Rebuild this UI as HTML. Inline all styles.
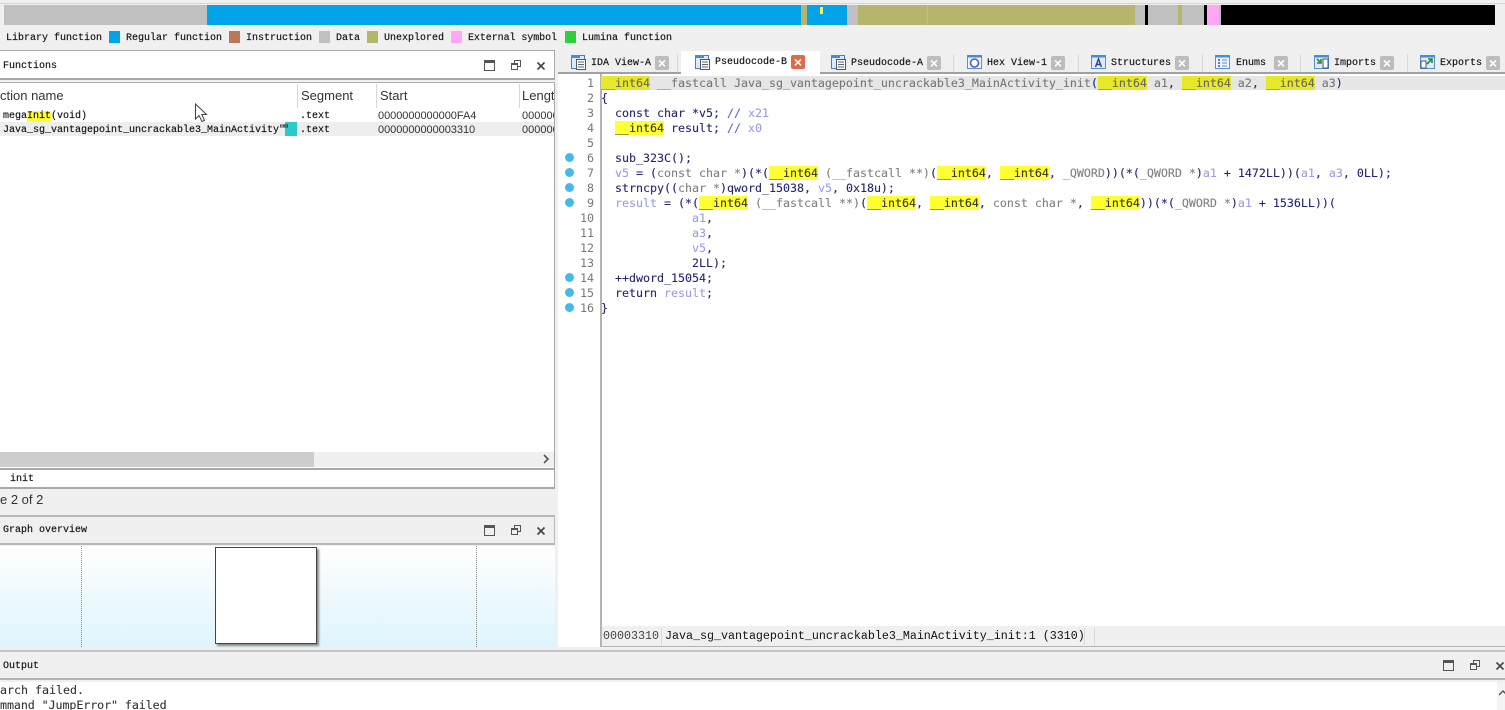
<!DOCTYPE html>
<html><head><meta charset="utf-8"><style>
html,body{margin:0;padding:0;background:#f0f0f0;width:1505px;height:710px;overflow:hidden}
#r{position:relative;width:1505px;height:710px;overflow:hidden;filter:blur(.35px)}
.a{position:absolute}
.t{position:absolute;margin-top:2px;font:10px/14px "Liberation Mono",monospace;color:#111;white-space:pre;-webkit-text-stroke:.15px #111}
.s{position:absolute;font:13px/16px "Liberation Sans",sans-serif;color:#333;white-space:pre}
.c{position:absolute;left:601px;font:11.67px/15px "DejaVu Sans Mono","Liberation Mono",monospace;color:#24246e;white-space:pre;letter-spacing:-.02px;-webkit-text-stroke:.1px}
.n{position:absolute;left:560px;width:34px;text-align:right;font:11.67px/15px "DejaVu Sans Mono",monospace;color:#777}
.d{position:absolute;left:565px;width:9px;height:9px;border-radius:50%;background:#45b8f0}
.g{color:#808080}.l{color:#9c9ce6}.h{background:#ffff33;color:#333}.h1{background:#e8e82a;color:#666}
.sw{position:absolute;top:31px;width:11px;height:12px}
.x{position:absolute;top:56px;width:14px;height:14px;border-radius:2px;background:#bcbcbc;color:#fff;font:bold 14px/14px "Liberation Sans",sans-serif;text-align:center}
.i{position:absolute;top:54px;width:16px;height:16px}
.sp{position:absolute;width:1px;background:#d8d8d8}
</style></head><body><div id="r">

<!-- top strip -->
<div class="a" style="left:0;top:3px;width:1505px;height:1px;background:#d4d4d4"></div>
<div class="a" style="left:4px;top:5px;width:203px;height:20px;background:#c0c0c0"></div>
<div class="a" style="left:207px;top:5px;width:594px;height:20px;background:#00a2e8"></div>
<div class="a" style="left:801px;top:5px;width:6px;height:20px;background:#b5b56b"></div>
<div class="a" style="left:807px;top:5px;width:40px;height:20px;background:#00a2e8"></div>
<div class="a" style="left:820px;top:7px;width:3px;height:7px;background:#ffef50"></div>
<div class="a" style="left:847px;top:5px;width:11px;height:20px;background:#c0c0c0"></div>
<div class="a" style="left:858px;top:5px;width:277px;height:20px;background:#b5b56b"></div>
<div class="a" style="left:927px;top:5px;width:1px;height:20px;background:#c2c282"></div>
<div class="a" style="left:1135px;top:5px;width:10px;height:20px;background:#c0c0c0"></div>
<div class="a" style="left:1145px;top:5px;width:3px;height:20px;background:#000"></div>
<div class="a" style="left:1148px;top:5px;width:30px;height:20px;background:#c0c0c0"></div>
<div class="a" style="left:1178px;top:5px;width:4px;height:20px;background:#b5b56b"></div>
<div class="a" style="left:1182px;top:5px;width:22px;height:20px;background:#c0c0c0"></div>
<div class="a" style="left:1204px;top:5px;width:3px;height:20px;background:#000"></div>
<div class="a" style="left:1207px;top:5px;width:12px;height:20px;background:#ffa6f5"></div>
<div class="a" style="left:1219px;top:5px;width:2px;height:20px;background:#c0c0c0"></div>
<div class="a" style="left:1221px;top:5px;width:274px;height:20px;background:#000"></div>

<!-- legend -->
<div class="t" style="left:6px;top:30px">Library function</div>
<div class="sw" style="left:109px;background:#00a2e8"></div>
<div class="t" style="left:126px;top:30px">Regular function</div>
<div class="sw" style="left:229px;background:#b8795a"></div>
<div class="t" style="left:246px;top:30px">Instruction</div>
<div class="sw" style="left:319px;background:#c0c0c0"></div>
<div class="t" style="left:336px;top:30px">Data</div>
<div class="sw" style="left:367px;background:#b5b56b"></div>
<div class="t" style="left:384px;top:30px">Unexplored</div>
<div class="sw" style="left:451px;background:#ffa6f5"></div>
<div class="t" style="left:468px;top:30px;letter-spacing:-.07px">External symbol</div>
<div class="sw" style="left:565px;background:#2fcf3a"></div>
<div class="t" style="left:582px;top:30px">Lumina function</div>

<!-- Functions panel -->
<div class="a" style="left:0;top:50px;width:555px;height:30px;background:#fff;border-top:1px solid #a8a8a8;border-bottom:2px solid #a8a8a8;border-right:1px solid #a8a8a8;box-sizing:border-box"></div>
<div class="t" style="left:3px;top:58px">Functions</div>
<svg class="a" style="left:484px;top:60px" width="11" height="11"><rect x=".5" y=".5" width="10" height="10" fill="none" stroke="#555"/><rect x="0" y="0" width="11" height="3" fill="#555"/></svg>
<svg class="a" style="left:511px;top:60px" width="10" height="10"><rect x="3.5" y=".5" width="6" height="6" fill="none" stroke="#555"/><rect x=".5" y="3.5" width="6" height="6" fill="#fff" stroke="#555"/><rect x="0" y="3" width="7" height="2" fill="#555"/></svg>
<svg class="a" style="left:536px;top:61px" width="10" height="10"><path d="M1.5 1.5L8.5 8.5M8.5 1.5L1.5 8.5" stroke="#444" stroke-width="1.6"/></svg>

<div class="a" style="left:0;top:82px;width:555px;height:387px;background:#fff;border-right:1px solid #a8a8a8;border-top:1px solid #b0b0b0;box-sizing:border-box"></div>
<div class="s" style="left:0;top:88px">ction name</div>
<div class="s" style="left:301px;top:88px">Segment</div>
<div class="s" style="left:380px;top:88px">Start</div>
<div class="s" style="left:522px;top:88px;width:32px;overflow:hidden">Length</div>
<div class="sp" style="left:297px;top:84px;height:24px"></div>
<div class="sp" style="left:376px;top:84px;height:24px"></div>
<div class="sp" style="left:519px;top:84px;height:24px"></div>

<div class="t" style="left:3px;top:108px">mega<span style="background:#ffff33">Init</span>(void)</div>
<div class="t" style="left:300px;top:108px">.text</div>
<div class="s" style="left:378px;top:108px;font-size:11px;letter-spacing:-.05px">0000000000000FA4</div>
<div class="s" style="left:522px;top:108px;font-size:11px;width:32px;overflow:hidden">00000000</div>
<div class="a" style="left:0;top:122px;width:554px;height:14px;background:#eeeeee"></div>
<div class="t" style="left:3px;top:122px">Java_sg_vantagepoint_uncrackable3_MainActivity</div>
<div class="a" style="left:285px;top:122px;width:12px;height:14px;background:#2cc9c9"></div>
<div class="t" style="left:279px;top:122px;letter-spacing:-2px">""</div>
<div class="t" style="left:300px;top:122px">.text</div>
<div class="s" style="left:378px;top:122px;font-size:11px;letter-spacing:-.05px">0000000000003310</div>
<div class="s" style="left:522px;top:122px;font-size:11px;width:32px;overflow:hidden">00000000</div>

<svg class="a" style="left:194px;top:103px" width="14" height="20"><path d="M1.5 1V16L5 12.5L8 18.5L10.5 17.5L7.8 11.5H12.5Z" fill="#fff" stroke="#444" stroke-width="1"/></svg>

<!-- scrollbar -->
<div class="a" style="left:0;top:452px;width:554px;height:15px;background:#f0f0f0"></div>
<div class="a" style="left:0;top:452px;width:314px;height:15px;background:#cdcdcd"></div>
<svg class="a" style="left:542px;top:454px" width="8" height="10"><path d="M2 1L6 5L2 9" fill="none" stroke="#555" stroke-width="1.6"/></svg>

<!-- filter input -->
<div class="a" style="left:0;top:468px;width:555px;height:21px;background:#fff;border:1px solid #a8a8a8;border-width:2px 1px 2px 0;box-sizing:border-box"></div>
<div class="t" style="left:10px;top:471px">init</div>
<div class="s" style="left:0;top:492px">e 2 of 2</div>

<!-- Graph overview -->
<div class="a" style="left:0;top:515px;width:555px;height:30px;background:#f0f0f0;border:1px solid #b8b8b8;border-width:2px 1px 2px 0;box-sizing:border-box"></div>
<div class="t" style="left:3px;top:522px">Graph overview</div>
<svg class="a" style="left:484px;top:525px" width="11" height="11"><rect x=".5" y=".5" width="10" height="10" fill="none" stroke="#555"/><rect x="0" y="0" width="11" height="3" fill="#555"/></svg>
<svg class="a" style="left:511px;top:525px" width="10" height="10"><rect x="3.5" y=".5" width="6" height="6" fill="none" stroke="#555"/><rect x=".5" y="3.5" width="6" height="6" fill="#f0f0f0" stroke="#555"/><rect x="0" y="3" width="7" height="2" fill="#555"/></svg>
<svg class="a" style="left:536px;top:526px" width="10" height="10"><path d="M1.5 1.5L8.5 8.5M8.5 1.5L1.5 8.5" stroke="#444" stroke-width="1.6"/></svg>
<div class="a" style="left:0;top:546px;width:555px;height:101px;background:linear-gradient(#fff,#def4fd)"></div>
<div class="a" style="left:81px;top:546px;width:0;height:101px;border-left:1px dotted #888"></div>
<div class="a" style="left:476px;top:546px;width:0;height:101px;border-left:1px dotted #888"></div>
<div class="a" style="left:215px;top:547px;width:102px;height:97px;background:#fff;border:1px solid #444;box-sizing:border-box;box-shadow:2px 2px 2px #888"></div>

<!-- Tabs -->
<div class="a" style="left:558px;top:53px;width:947px;height:19px;background:#efefef"></div>
<div class="a" style="left:558px;top:72px;width:947px;height:2px;background:#a0a0a0"></div>
<div class="a" style="left:681px;top:51px;width:139px;height:23px;background:#fff;border-radius:1px 1px 0 0"></div>
<div class="sp" style="left:677px;top:54px;height:18px"></div>
<div class="sp" style="left:953px;top:54px;height:18px"></div>
<div class="sp" style="left:1078px;top:54px;height:18px"></div>
<div class="sp" style="left:1202px;top:54px;height:18px"></div>
<div class="sp" style="left:1300px;top:54px;height:18px"></div>
<div class="sp" style="left:1407px;top:54px;height:18px"></div>

<svg class="i" style="left:571px"><rect x=".5" y="1.5" width="13" height="13" fill="#dbe9f8" stroke="#3f7fc4"/><rect x="0" y="1" width="9" height="3" fill="#3f8fe0"/><rect x="5.5" y="5.5" width="9" height="10" fill="#fff" stroke="#556"/><path d="M7 8h6M7 10.5h6M7 13h6" stroke="#567"/></svg>
<div class="t" style="left:591px;top:55px">IDA View-A</div><div class="x" style="left:655px">×</div>

<svg class="i" style="left:695px"><rect x=".5" y="1.5" width="13" height="13" fill="#dbe9f8" stroke="#3f7fc4"/><rect x="0" y="1" width="9" height="3" fill="#3f8fe0"/><rect x="5.5" y="5.5" width="9" height="10" fill="#fff" stroke="#556"/><path d="M7 8h6M7 10.5h6M7 13h6" stroke="#567"/></svg>
<div class="t" style="left:715px;top:54px">Pseudocode-B</div><div class="x" style="left:791px;background:#e2684a;top:55px">×</div>

<svg class="i" style="left:831px"><rect x=".5" y="1.5" width="13" height="13" fill="#dbe9f8" stroke="#3f7fc4"/><rect x="0" y="1" width="9" height="3" fill="#3f8fe0"/><rect x="5.5" y="5.5" width="9" height="10" fill="#fff" stroke="#556"/><path d="M7 8h6M7 10.5h6M7 13h6" stroke="#567"/></svg>
<div class="t" style="left:851px;top:55px">Pseudocode-A</div><div class="x" style="left:927px">×</div>

<svg class="i" style="left:967px"><rect x=".5" y="1.5" width="14" height="13" fill="#eef4fc" stroke="#5a8fd0"/><rect x="0" y="1" width="15" height="2.5" fill="#3f8fe0"/><circle cx="7.5" cy="9" r="4" fill="#fff" stroke="#4a5fd0" stroke-width="1.6"/></svg>
<div class="t" style="left:987px;top:55px">Hex View-1</div><div class="x" style="left:1051px">×</div>

<svg class="i" style="left:1091px"><rect x=".5" y="1.5" width="14" height="13" fill="#dfeafa" stroke="#5a8fd0"/><rect x="0" y="1" width="15" height="2.5" fill="#3f8fe0"/><path d="M4.5 13L7.5 5L10.5 13M5.5 10.5H9.5" fill="none" stroke="#24448c" stroke-width="1.4"/></svg>
<div class="t" style="left:1111px;top:55px">Structures</div><div class="x" style="left:1175px">×</div>

<svg class="i" style="left:1215px"><rect x=".5" y="1.5" width="14" height="13" fill="#eef4fc" stroke="#5a8fd0"/><rect x="0" y="1" width="15" height="2.5" fill="#3f8fe0"/><path d="M3 6h2M3 9h2M3 12h2" stroke="#2a55b0" stroke-width="1.4"/><path d="M7 6h5M7 9h5M7 12h5" stroke="#6b8ac8"/></svg>
<div class="t" style="left:1236px;top:55px">Enums</div><div class="x" style="left:1274px">×</div>

<svg class="i" style="left:1314px"><rect x=".5" y="1.5" width="14" height="13" fill="#dfeafa" stroke="#5a8fd0"/><rect x="0" y="1" width="15" height="2.5" fill="#3f8fe0"/><rect x="9" y="5" width="5" height="9" fill="#fff" stroke="#456"/><path d="M3 5L7 9M7 5V9H3" fill="none" stroke="#1f8f3a" stroke-width="1.6"/></svg>
<div class="t" style="left:1334px;top:55px">Imports</div><div class="x" style="left:1380px">×</div>

<svg class="i" style="left:1420px"><rect x=".5" y="1.5" width="14" height="13" fill="#dfeafa" stroke="#5a8fd0"/><rect x="0" y="1" width="15" height="2.5" fill="#3f8fe0"/><rect x="1" y="7" width="5" height="7" fill="#fff" stroke="#456"/><path d="M7 10L12 5M8 5H12V9" fill="none" stroke="#1f8f3a" stroke-width="1.6"/></svg>
<div class="t" style="left:1440px;top:55px">Exports</div><div class="x" style="left:1486px">×</div>

<!-- Code panel -->
<div class="a" style="left:558px;top:74px;width:947px;height:573px;background:#fff"></div>
<div class="a" style="left:600px;top:74px;width:2px;height:573px;background:#b4b4b4"></div>
<div class="a" style="left:602px;top:76px;width:903px;height:14px;background:#e6e6e6"></div>
<div class="c g" style="top:76px;color:#777"><span class="h1">__int64</span> __fastcall Java_sg_vantagepoint_uncrackable3_MainActivity_init<span style="color:#24246e">(</span><span class="h1">__int64</span> a1<span style="color:#24246e">,</span> <span class="h1">__int64</span> a2<span style="color:#24246e">,</span> <span class="h1">__int64</span> a3<span style="color:#24246e">)</span></div>
<div class="c" style="top:91px">{</div>
<div class="c" style="top:106px">  const char *v5; <span style="color:#5a6ad0">// </span><span class="l">x21</span></div>
<div class="c" style="top:121px">  <span class="h">__int64</span> result; <span style="color:#5a6ad0">// </span><span class="l">x0</span></div>
<div class="c" style="top:151px">  sub_323C();</div>
<div class="c" style="top:166px">  <span class="l">v5</span> = (<span class="g">const char *</span>)(*(<span class="h">__int64</span> <span class="g">(__fastcall **)</span>(<span class="h">__int64</span>, <span class="h">__int64</span>, <span class="g">_QWORD</span>))(*(<span class="g">_QWORD *</span>)<span class="l">a1</span> + 1472LL))(<span class="l">a1</span>, <span class="l">a3</span>, 0LL);</div>
<div class="c" style="top:181px">  strncpy((<span class="g">char *</span>)qword_15038, <span class="l">v5</span>, 0x18u);</div>
<div class="c" style="top:196px">  <span class="l">result</span> = (*(<span class="h">__int64</span> <span class="g">(__fastcall **)</span>(<span class="h">__int64</span>, <span class="h">__int64</span>, <span class="g">const char *</span>, <span class="h">__int64</span>))(*(<span class="g">_QWORD *</span>)<span class="l">a1</span> + 1536LL))(</div>
<div class="c" style="top:211px">             <span class="l">a1</span>,</div>
<div class="c" style="top:226px">             <span class="l">a3</span>,</div>
<div class="c" style="top:241px">             <span class="l">v5</span>,</div>
<div class="c" style="top:256px">             2LL);</div>
<div class="c" style="top:271px">  ++dword_15054;</div>
<div class="c" style="top:286px">  return <span class="l">result</span>;</div>
<div class="c" style="top:301px">}</div>

<div class="n" style="top:76px">1</div><div class="n" style="top:91px">2</div><div class="n" style="top:106px">3</div><div class="n" style="top:121px">4</div><div class="n" style="top:136px">5</div><div class="n" style="top:151px">6</div><div class="n" style="top:166px">7</div><div class="n" style="top:181px">8</div><div class="n" style="top:196px">9</div><div class="n" style="top:211px">10</div><div class="n" style="top:226px">11</div><div class="n" style="top:241px">12</div><div class="n" style="top:256px">13</div><div class="n" style="top:271px">14</div><div class="n" style="top:286px">15</div><div class="n" style="top:301px">16</div>
<div class="d" style="top:153px"></div><div class="d" style="top:168px"></div><div class="d" style="top:183px"></div><div class="d" style="top:198px"></div><div class="d" style="top:273px"></div><div class="d" style="top:288px"></div><div class="d" style="top:303px"></div>

<!-- status -->
<div class="a" style="left:602px;top:626px;width:903px;height:20px;background:#f0f0f0"></div>
<div class="a" style="left:600px;top:646px;width:905px;height:1px;background:#b4b4b4"></div>
<div class="t" style="left:603px;top:627px;color:#444;font-size:11.67px;-webkit-text-stroke:0">00003310</div>
<div class="sp" style="left:661px;top:628px;height:17px"></div>
<div class="t" style="left:665px;top:627px;font-size:11.67px;-webkit-text-stroke:0">Java_sg_vantagepoint_uncrackable3_MainActivity_init:1 (3310)</div>
<div class="sp" style="left:1084px;top:628px;height:17px"></div>
<div class="sp" style="left:1094px;top:628px;height:17px"></div>

<!-- Output -->
<div class="a" style="left:0;top:650px;width:1505px;height:30px;background:#f0f0f0;border-top:2px solid #c4c4c4;border-bottom:2px solid #b4b4b4;box-sizing:border-box"></div>
<div class="t" style="left:3px;top:658px">Output</div>
<svg class="a" style="left:1443px;top:660px" width="11" height="11"><rect x=".5" y=".5" width="10" height="10" fill="none" stroke="#555"/><rect x="0" y="0" width="11" height="3" fill="#555"/></svg>
<svg class="a" style="left:1470px;top:660px" width="10" height="10"><rect x="3.5" y=".5" width="6" height="6" fill="none" stroke="#555"/><rect x=".5" y="3.5" width="6" height="6" fill="#f0f0f0" stroke="#555"/><rect x="0" y="3" width="7" height="2" fill="#555"/></svg>
<svg class="a" style="left:1495px;top:661px" width="10" height="10"><path d="M1.5 1.5L8.5 8.5M8.5 1.5L1.5 8.5" stroke="#444" stroke-width="1.6"/></svg>
<div class="a" style="left:0;top:682px;width:1505px;height:28px;background:#fff"></div>
<div class="a" style="left:1497px;top:682px;width:8px;height:28px;background:#f4f4f4"></div>
<svg class="a" style="left:1499px;top:690px" width="6" height="6"><path d="M0 5L4 1L8 5" fill="none" stroke="#555" stroke-width="1.4"/></svg>
<div class="c" style="left:0;top:683px;color:#333">arch failed.</div>
<div class="c" style="left:0;top:698px;color:#333;letter-spacing:-.08px">mmand "JumpError" failed</div>

</div></body></html>
